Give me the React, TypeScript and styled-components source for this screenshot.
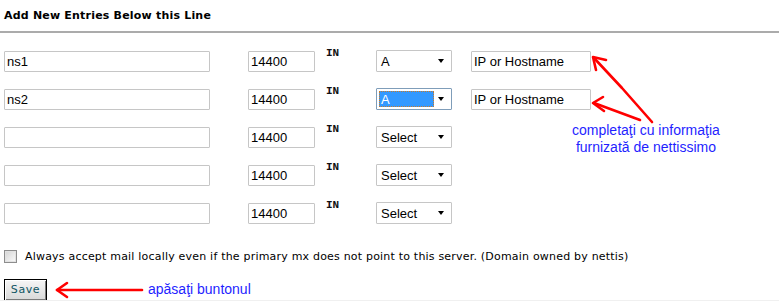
import styled, { createGlobalStyle, css } from 'styled-components';

const GlobalStyle = createGlobalStyle`
  html, body {
    margin: 0;
    padding: 0;
    background: #fff;
  }
  body {
    font-family: 'DejaVu Sans', Verdana, sans-serif;
  }
`;

type Entry = {
  name: string;
  type: string;
  active?: boolean;
  host?: string;
};

const entries: Entry[] = [
  { name: 'ns1', type: 'A', host: 'IP or Hostname' },
  { name: 'ns2', type: 'A', active: true, host: 'IP or Hostname' },
  { name: '', type: 'Select' },
  { name: '', type: 'Select' },
  { name: '', type: 'Select' },
];

const Page = styled.div`
  position: relative;
  width: 779px;
  height: 300px;
  overflow: hidden;
  border-bottom: 1px solid #f0f0f0;
`;

const Header = styled.div`
  height: 22px;
  padding: 9px 0 0 4px;
  border-bottom: 2px solid #ababab;
`;

const Title = styled.h3`
  margin: 0;
  font-family: 'DejaVu Sans', Verdana, sans-serif;
  font-size: 11px;
  line-height: 13px;
  font-weight: bold;
  letter-spacing: 0.2px;
  color: #000;
`;

const Rows = styled.div`
  margin-top: 14px;
  padding-left: 4px;
`;

const Row = styled.div`
  display: grid;
  grid-template-columns: 244px 78px 50px 95px 120px;
  align-items: start;
  height: 38px;
`;

const TextField = styled.input<{ $w: number }>`
  box-sizing: border-box;
  width: ${({ $w }) => $w}px;
  height: 21px;
  margin: 4px 0 0;
  padding: 1px 2px;
  border: 1px solid #c6c6c6;
  border-radius: 1px;
  background: #fff;
  font-family: 'Liberation Sans', Arial, sans-serif;
  font-size: 13px;
  color: #000;
  outline: none;
`;

const ClassLabel = styled.span`
  font-family: 'Liberation Mono', 'Courier New', monospace;
  font-size: 11px;
  line-height: 12px;
  font-weight: bold;
  color: #111;
`;

const SelectBox = styled.div<{ $active?: boolean }>`
  box-sizing: border-box;
  width: 76px;
  height: 22px;
  margin-top: 3px;
  padding: 2px;
  display: flex;
  align-items: center;
  gap: 4px;
  border: 1px solid ${({ $active }) => ($active ? '#7f9db9' : '#c6c6c6')};
  border-radius: 1px;
  background: #fff;
`;

const SelectValue = styled.span<{ $active?: boolean }>`
  box-sizing: border-box;
  flex: 1;
  height: 16px;
  padding-left: 1px;
  font-family: 'Liberation Sans', Arial, sans-serif;
  font-size: 13px;
  line-height: 15px;
  color: #000;
  border: 1px solid transparent;
  ${({ $active }) =>
    $active &&
    css`
      background: #3399ff;
      color: #fff;
      border: 1px dotted #c87a2a;
    `}
`;

const Caret = styled.span`
  width: 0;
  height: 0;
  margin-right: 5px;
  border-left: 3.5px solid transparent;
  border-right: 3.5px solid transparent;
  border-top: 4px solid #000;
`;

const CheckRow = styled.label`
  display: flex;
  align-items: center;
  gap: 8px;
  margin-top: 13px;
  padding-left: 4px;
  height: 13px;
`;

const CheckBox = styled.span`
  box-sizing: border-box;
  width: 13px;
  height: 13px;
  border: 1px solid #8d8d8d;
  background: linear-gradient(135deg, #d4d4d4 0%, #ececec 60%, #fafafa 100%);
  box-shadow: inset 0 0 0 1px #e2e2e2;
`;

const CheckText = styled.span`
  font-family: 'DejaVu Sans', Verdana, sans-serif;
  font-size: 11px;
  line-height: 13px;
  letter-spacing: 0.2px;
  color: #000;
`;

const SaveRow = styled.div`
  margin-top: 15px;
  padding-left: 4px;
`;

const SaveButton = styled.button`
  box-sizing: border-box;
  width: 43px;
  height: 22px;
  padding: 0;
  border: 1px solid #000;
  background: linear-gradient(#f6f6f6, #d8d8d8);
  box-shadow: inset 1px 1px 0 #fff, inset -1px -1px 0 #7a7a7a;
  font-family: 'DejaVu Sans', Verdana, sans-serif;
  font-size: 11px;
  letter-spacing: 0.6px;
  color: #0f5563;
`;

const Callout = styled.div<{ $x: number; $y: number }>`
  position: absolute;
  left: ${({ $x }) => $x}px;
  top: ${({ $y }) => $y}px;
  font-family: 'Liberation Sans', Arial, sans-serif;
  font-size: 14px;
  line-height: 17px;
  color: #1f1fff;
  text-align: center;
  white-space: nowrap;
`;

const Arrows = styled.svg`
  position: absolute;
  inset: 0;
  pointer-events: none;
`;

export default function App() {
  return (
    <>
      <GlobalStyle />
      <Page>
        <Header>
          <Title>Add New Entries Below this Line</Title>
        </Header>

        <Rows>
          {entries.map((e, i) => (
            <Row key={i}>
              <TextField $w={206} defaultValue={e.name} />
              <TextField $w={67} defaultValue="14400" />
              <ClassLabel>IN</ClassLabel>
              <SelectBox $active={e.active}>
                <SelectValue $active={e.active}>{e.type}</SelectValue>
                <Caret />
              </SelectBox>
              {e.host ? <TextField $w={120} defaultValue={e.host} /> : <span />}
            </Row>
          ))}
        </Rows>

        <CheckRow>
          <CheckBox />
          <CheckText>
            Always accept mail locally even if the primary mx does not point to this server.
            (Domain owned by nettis)
          </CheckText>
        </CheckRow>

        <SaveRow>
          <SaveButton>Save</SaveButton>
        </SaveRow>

        <Callout $x={572} $y={122}>
          completaţi cu informaţia
          <br />
          furnizată de nettissimo
        </Callout>
        <Callout $x={148} $y={281}>apăsaţi buntonul</Callout>

        <Arrows width="779" height="301" viewBox="0 0 779 301">
          <g fill="none" stroke="#ff0000" strokeWidth="2.6" strokeLinecap="round" strokeLinejoin="round">
            <path d="M652 122 L622 88 L594 58" />
            <path d="M606 60 L593 57 L596 70" />
            <path d="M640 120 L594 103" />
            <path d="M603 97 L593 103 L604 111" />
            <path d="M142 290 L57 290" />
            <path d="M67 283 L57 290 L67 297" />
          </g>
        </Arrows>
      </Page>
    </>
  );
}
